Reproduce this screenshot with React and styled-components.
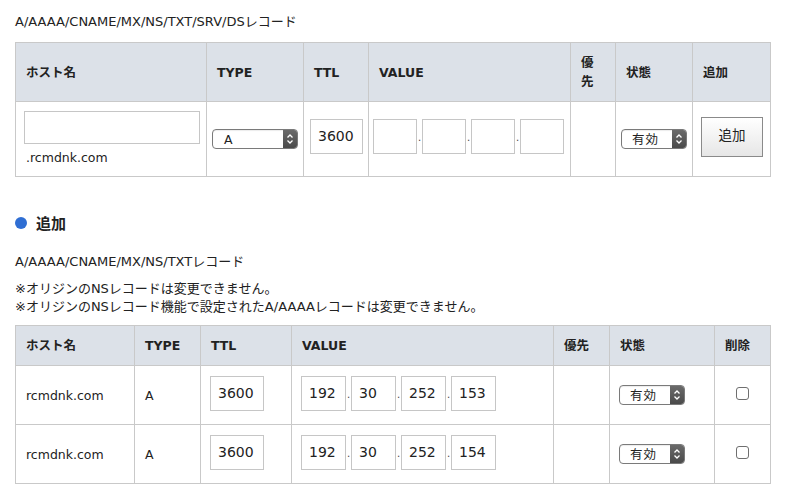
import React from "react";
import styled, { createGlobalStyle } from "styled-components";

const Global = createGlobalStyle`
  html, body { margin: 0; padding: 0; background: #fff; }
  body {
    font-family: "DejaVu Sans", "Noto Sans CJK JP", sans-serif;
    font-size: 12px;
    color: #222;
  }
`;

const Page = styled.div`
  padding: 13px 30px 0 15px;
`;

const Caption = styled.div`
  font-size: 13px;
  line-height: 18px;
  margin-bottom: ${(p) => p.$mb || 0}px;
`;

const Table = styled.table`
  width: 755px;
  table-layout: fixed;
  border-collapse: collapse;
  border: 1px solid #c9c9c9;
`;

const Th = styled.th`
  background: #dce1e8;
  border: 1px solid #c9c9c9;
  text-align: left;
  font-weight: bold;
  font-size: 12.5px;
  line-height: 19px;
  padding: 0 11px 0 10px;
  height: ${(p) => p.$h}px;
  vertical-align: middle;
  box-sizing: border-box;
  color: #222;
`;

const Td = styled.td`
  border: 1px solid #c9c9c9;
  padding: ${(p) => p.$pad || "0 0 0 10px"};
  vertical-align: middle;
  height: ${(p) => p.$h || 0}px;
  text-align: ${(p) => (p.$center ? "center" : "left")};
  box-sizing: border-box;
  font-size: 12.5px;
`;

const TextInput = styled.input`
  box-sizing: border-box;
  width: ${(p) => p.$w}px;
  height: ${(p) => p.$h}px;
  border: 1px solid #c6c6c6;
  font-family: "DejaVu Sans", "Noto Sans CJK JP", sans-serif;
  font-size: 14px;
  color: #222;
  padding: 0 0 2px 7px;
  margin: 0;
  outline: none;
  background: #fff;
  display: block;
`;

const HostBox = styled.div`
  display: flex;
  flex-direction: column;
  gap: 5px;
`;

const Suffix = styled.div`
  font-size: 12.5px;
  line-height: 18px;
  padding-left: 2px;
`;

const IpRow = styled.div`
  display: flex;
  align-items: flex-end;
`;

const Dot = styled.span`
  width: ${(p) => p.$gap}px;
  text-align: center;
  font-size: 10px;
  line-height: 10px;
  padding-bottom: 11px;
  color: #444;
`;

const SelectBox = styled.div`
  box-sizing: border-box;
  width: ${(p) => p.$w}px;
  height: 20px;
  border: 1px solid #7a7a7a;
  border-radius: 4px;
  display: flex;
  overflow: hidden;
  background: #fff;
  box-shadow: inset 0 1px 1px rgba(0,0,0,0.08);
`;

const SelectLabel = styled.span`
  flex: 1;
  font-size: 12.5px;
  line-height: 19px;
  padding-left: ${(p) => p.$pl}px;
  letter-spacing: 1px;
  color: #222;
  font-family: "DejaVu Sans", "Noto Sans CJK JP", sans-serif;
`;

const SelectArrow = styled.span`
  width: 14px;
  background: linear-gradient(#6a6a6a, #4a4a4a);
  display: flex;
  align-items: center;
  justify-content: center;
`;

const Button = styled.button`
  box-sizing: border-box;
  width: 62px;
  height: 40px;
  border: 1px solid #8a8a8a;
  background: linear-gradient(#ffffff, #e6e6e6);
  font-family: "Noto Sans CJK JP", sans-serif;
  font-size: 13.5px;
  color: #222;
  padding: 0 0 5px 0;
  margin: 0;
`;

const Heading = styled.div`
  display: flex;
  align-items: center;
  gap: 9px;
  font-size: 15px;
  font-weight: bold;
  line-height: 20px;
  margin: 36px 0 20px;
  font-family: "Noto Sans CJK JP", sans-serif;
`;

const Bullet = styled.span`
  width: 12px;
  height: 12px;
  border-radius: 50%;
  background: #2f6ed3;
`;

const Notes = styled.div`
  margin: 9px 0 9px;
`;

const Check = styled.span`
  display: inline-block;
  width: 13px;
  height: 13px;
  box-sizing: border-box;
  border: 1px solid #6f6f6f;
  border-radius: 3px;
  background: #fff;
  vertical-align: middle;
  margin-bottom: 3px;
`;

function Select({ w, label, pl }) {
  return (
    <SelectBox $w={w}>
      <SelectLabel $pl={pl}>{label}</SelectLabel>
      <SelectArrow>
        <svg width="8" height="12" viewBox="0 0 8 12">
          <path d="M1.5 4.5 L4 2 L6.5 4.5 M1.5 7.5 L4 10 L6.5 7.5" fill="none" stroke="#fff" strokeWidth="1.3" />
        </svg>
      </SelectArrow>
    </SelectBox>
  );
}

function IpInputs({ values, w, gap }) {
  return (
    <IpRow>
      {values.map((v, i) => (
        <React.Fragment key={i}>
          {i > 0 && <Dot $gap={gap}>.</Dot>}
          <TextInput $w={w} $h={35} defaultValue={v} readOnly />
        </React.Fragment>
      ))}
    </IpRow>
  );
}

const rows = [
  { host: "rcmdnk.com", last: "153" },
  { host: "rcmdnk.com", last: "154" },
];

export default function App() {
  return (
    <Page>
      <Global />
      <Caption $mb={11}>A/AAAA/CNAME/MX/NS/TXT/SRV/DSレコード</Caption>
      <Table>
        <colgroup>
          <col style={{ width: 191 }} />
          <col style={{ width: 97 }} />
          <col style={{ width: 65 }} />
          <col style={{ width: 202 }} />
          <col style={{ width: 45 }} />
          <col style={{ width: 77 }} />
          <col style={{ width: 78 }} />
        </colgroup>
        <thead>
          <tr>
            <Th $h={59}>ホスト名</Th>
            <Th $h={59}>TYPE</Th>
            <Th $h={59}>TTL</Th>
            <Th $h={59}>VALUE</Th>
            <Th $h={59}>優先</Th>
            <Th $h={59}>状態</Th>
            <Th $h={59}>追加</Th>
          </tr>
        </thead>
        <tbody>
          <tr>
            <Td $h={75} $pad="8px 0 8px 8px">
              <HostBox>
                <TextInput $w={176} $h={33} readOnly />
                <Suffix>.rcmdnk.com</Suffix>
              </HostBox>
            </Td>
            <Td $pad="0 0 0 5px">
              <Select w={86} label="A" pl={11} />
            </Td>
            <Td $pad="0 0 5px 6px">
              <TextInput $w={53} $h={35} defaultValue="3600" readOnly />
            </Td>
            <Td $pad="0 0 5px 4px">
              <IpInputs values={["", "", "", ""]} w={44} gap={5} />
            </Td>
            <Td />
            <Td $pad="0 0 0 5px">
              <Select w={66} label="有効" pl={10} />
            </Td>
            <Td $pad="0 0 5px 8px">
              <Button>追加</Button>
            </Td>
          </tr>
        </tbody>
      </Table>

      <Heading>
        <Bullet />
        追加
      </Heading>
      <Caption>A/AAAA/CNAME/MX/NS/TXTレコード</Caption>
      <Notes>
        <Caption>※オリジンのNSレコードは変更できません。</Caption>
        <Caption>※オリジンのNSレコード機能で設定されたA/AAAAレコードは変更できません。</Caption>
      </Notes>

      <Table>
        <colgroup>
          <col style={{ width: 119 }} />
          <col style={{ width: 66 }} />
          <col style={{ width: 91 }} />
          <col style={{ width: 262 }} />
          <col style={{ width: 56 }} />
          <col style={{ width: 105 }} />
          <col style={{ width: 56 }} />
        </colgroup>
        <thead>
          <tr>
            <Th $h={40}>ホスト名</Th>
            <Th $h={40}>TYPE</Th>
            <Th $h={40}>TTL</Th>
            <Th $h={40}>VALUE</Th>
            <Th $h={40}>優先</Th>
            <Th $h={40}>状態</Th>
            <Th $h={40}>削除</Th>
          </tr>
        </thead>
        <tbody>
          {rows.map((r, i) => (
            <tr key={i}>
              <Td $h={59}>{r.host}</Td>
              <Td>A</Td>
              <Td $pad="0 0 3px 9px">
                <TextInput $w={54} $h={35} defaultValue="3600" readOnly />
              </Td>
              <Td $pad="0 0 3px 9px">
                <IpInputs values={["192", "30", "252", r.last]} w={45} gap={5} />
              </Td>
              <Td />
              <Td $pad="0 0 0 9px">
                <Select w={66} label="有効" pl={10} />
              </Td>
              <Td $center $pad="0">
                <Check />
              </Td>
            </tr>
          ))}
        </tbody>
      </Table>
    </Page>
  );
}
